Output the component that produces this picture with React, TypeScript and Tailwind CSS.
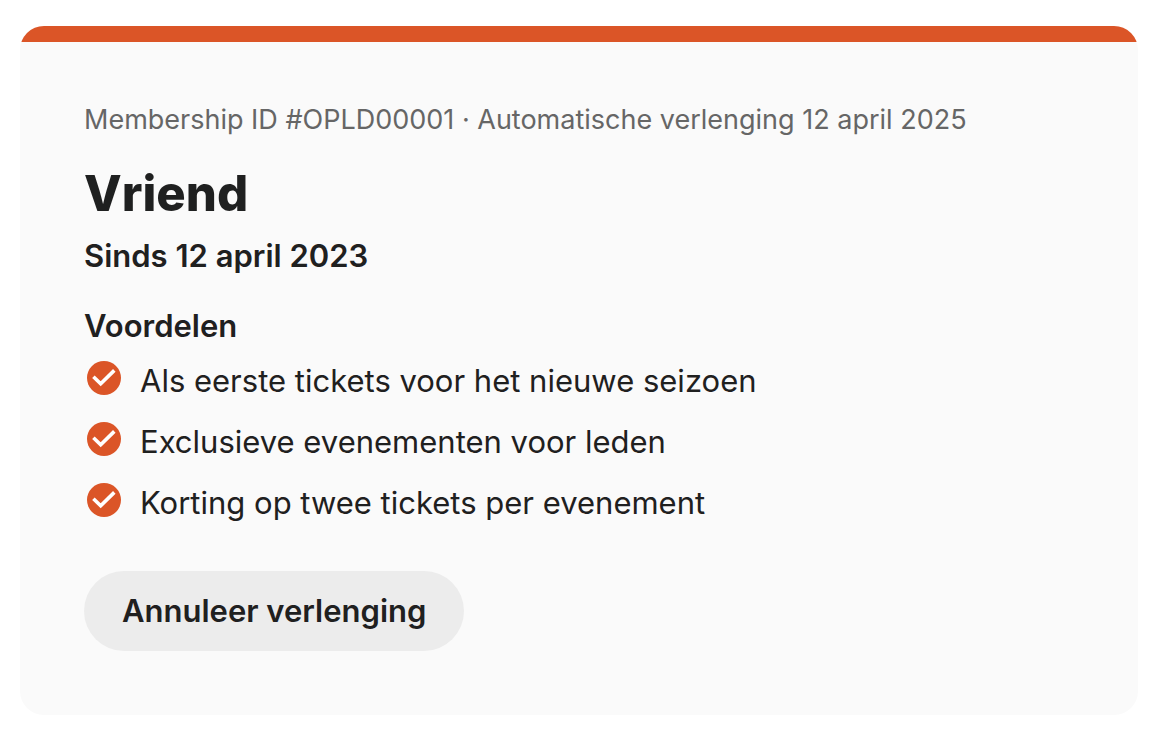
const benefits = [
  "Als eerste tickets voor het nieuwe seizoen",
  "Exclusieve evenementen voor leden",
  "Korting op twee tickets per evenement",
];

function CheckIcon() {
  return (
    <svg viewBox="0 0 40 40" className="h-10 w-10 shrink-0" aria-hidden="true">
      <circle cx="20" cy="20" r="17" fill="#db5527" />
      <path d="M9.4 18.7l7.3 7L30.3 12.4" fill="none" stroke="#fff" strokeWidth="3.6" />
    </svg>
  );
}

export default function App() {
  return (
    <main className="min-h-screen bg-white pt-[26px] pr-[26px] pb-9 pl-5 font-['Inter','Liberation_Sans',sans-serif] text-[#1f2020]">
      <article className="overflow-hidden rounded-3xl bg-[#fafafa]">
        <div className="h-4 bg-[#db5527]" />
        <div className="p-16">
          <p className="text-[27px] leading-7 text-[#666]">
            Membership ID #OPLD00001 · Automatische verlenging 12 april 2025
          </p>
          <h1 className="mt-6 text-[49px] leading-[72px] font-extrabold">Vriend</h1>
          <p className="mt-1.5 text-[31px] leading-10 font-semibold">Sinds 12 april 2023</p>

          <h2 className="mt-[30px] text-[31px] leading-10 font-semibold">Voordelen</h2>
          <ul className="mt-3 flex flex-col gap-[15px]">
            {benefits.map((benefit) => (
              <li key={benefit} className="flex items-start gap-4 text-[31px] leading-[46px]">
                <CheckIcon />
                {benefit}
              </li>
            ))}
          </ul>

          <button
            type="button"
            className="mt-[45px] h-20 cursor-pointer rounded-full bg-[#ececec] px-[38px] text-[31px] font-semibold"
          >
            Annuleer verlenging
          </button>
        </div>
      </article>
    </main>
  );
}
